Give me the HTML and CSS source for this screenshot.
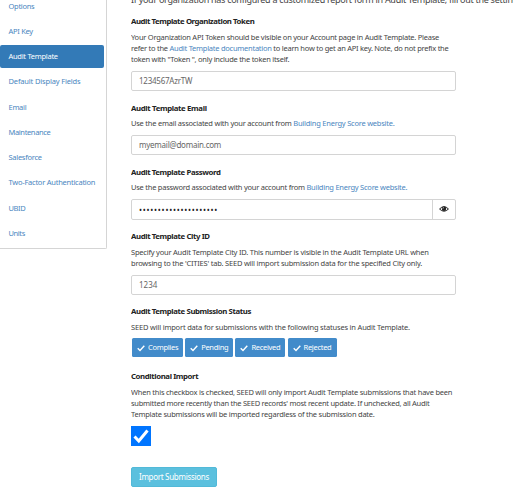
FILE: index.html
```html
<!DOCTYPE html>
<html lang="en">
<head>
<meta charset="utf-8">
<title>Audit Template</title>
<link rel="stylesheet" href="styles.css">
</head>
<body>
<div class="page">
  <nav class="sidebar">
    <a class="s-options">Options</a>
    <a class="s-api">API Key</a>
    <a class="active">Audit Template</a>
    <a class="s-fields">Default Display Fields</a>
    <a class="s-email">Email</a>
    <a class="s-maint">Maintenance</a>
    <a class="s-sales">Salesforce</a>
    <a class="s-two">Two-Factor Authentication</a>
    <a class="s-ubid">UBID</a>
    <a class="s-units">Units</a>
  </nav>
  <main>
    <p class="intro">If your organization has configured a customized report form in Audit Template, fill out the settings below.</p>
    <section class="group three">
      <h2 class="h1">Audit Template Organization Token</h2>
      <p><span class="l1">Your Organization API Token should be visible on your Account page in Audit Template. Please</span><br><span class="l2">refer to the <a>Audit Template documentation</a> to learn how to get an API key. Note, do not prefix the</span><br><span class="l3">token with "Token ", only include the token itself.</span></p>
      <div class="field"><span class="v1">1234567AzrTW</span></div>
    </section>
    <section class="group">
      <h2 class="h2">Audit Template Email</h2>
      <p><span class="l4">Use the email associated with your account from <a>Building Energy Score website.</a></span></p>
      <div class="field"><span class="v2">myemail@domain.com</span></div>
    </section>
    <section class="group">
      <h2>Audit Template Password</h2>
      <p><span class="l5">Use the password associated with your account from <a>Building Energy Score website.</a></span></p>
      <div class="field"><span class="dots">•••••••••••••••••••••</span>
        <span class="reveal"><svg viewBox="0 0 18 14"><path d="M1 7Q9-1.500 17 7Q9 15 1 7Z" fill="none" stroke="#222" stroke-width="1.800"/><circle cx="9" cy="6.500" r="4" fill="#222"/><path d="M6.800 6.500Q7 4.500 9 4.200" fill="none" stroke="#fff"/></svg></span></div>
    </section>
    <section class="group two">
      <h2>Audit Template City ID</h2>
      <p><span class="l6">Specify your Audit Template City ID. This number is visible in the Audit Template URL when</span><br><span class="l7">browsing to the 'CITIES' tab. SEED will import submission data for the specified City only.</span></p>
      <div class="field"><span class="v3">1234</span></div>
    </section>
    <section class="group status">
      <h2>Audit Template Submission Status</h2>
      <p><span class="l8">SEED will import data for submissions with the following statuses in Audit Template.</span></p>
      <div class="tags">
        <span class="tag t1"><svg viewBox="0 0 8 8"><path d="M.7 4.300L3 6.500L7.300 1.700"/></svg>Complies</span>
        <span class="tag t2"><svg viewBox="0 0 8 8"><path d="M.7 4.300L3 6.500L7.300 1.700"/></svg>Pending</span>
        <span class="tag t3"><svg viewBox="0 0 8 8"><path d="M.7 4.300L3 6.500L7.300 1.700"/></svg>Received</span>
        <span class="tag t4"><svg viewBox="0 0 8 8"><path d="M.7 4.300L3 6.500L7.300 1.700"/></svg>Rejected</span>
      </div>
    </section>
    <section class="group cond">
      <h2>Conditional Import</h2>
      <p><span class="l9">When this checkbox is checked, SEED will only import Audit Template submissions that have been</span><br><span class="l10">submitted more recently than the SEED records' most recent update. If unchecked, all Audit</span><br><span class="l11">Template submissions will be imported regardless of the submission date.</span></p>
      <div class="check"><svg viewBox="0 0 20 20"><path d="M3.500 10.500L7.800 15L16.500 4.500"/></svg></div>
    </section>
    <div class="import"><span>Import Submissions</span></div>
  </main>
</div>
</body>
</html>
```
FILE: styles.css
```css
* { box-sizing: border-box; }
body {
  margin: 0;
  width: 513px;
  height: 490px;
  overflow: hidden;
  background: #fff;
  color: #444;
  font: 7.5px/11.25px "Noto Sans", sans-serif;
}
.page { display: flex; align-items: flex-start; height: 490px; overflow: hidden; }
a { color: #4a86c0; white-space: nowrap; }
.sidebar {
  width: 107px;
  height: 248.500px;
  margin-right: 24px;
  flex: none;
  display: flex;
  flex-direction: column;
  gap: 2.100px;
  border-right: 1px solid #d5d5d5;
  border-bottom: 1px solid #d5d5d5;
  border-radius: 0 0 2px 0;
  letter-spacing: -.28px;
}
.sidebar a {
  flex: none;
  width: 104px;
  height: 23.200px;
  padding-left: 8.500px;
  line-height: 23px;
  border-radius: 2px;
}
.sidebar a:first-child { margin-top: -5.500px; }
.sidebar .active { background: #337ab7; color: #fff; }
.s-fields { letter-spacing: -.16px; }
.s-maint { letter-spacing: -.36px; }
.s-two { letter-spacing: -.24px; }
.s-ubid, .s-units { letter-spacing: -.4px; }
main { width: 382px; flex: none; overflow: hidden; height: 490px; }
.intro {
  margin: -7px 0 11px;
  height: 12px;
  line-height: 13px;
  font-size: 9px;
  letter-spacing: -.28px;
  white-space: nowrap;
}
.group { height: 64.250px; width: 325px; }
.group.three { height: 86.500px; }
.group.two { height: 75px; }
.group.status { height: 65px; }
.group.cond { height: 96px; }
h2 {
  margin: 0 0 4.500px;
  height: 11px;
  font-size: 7.800px;
  line-height: 11px;
  font-weight: 700;
  letter-spacing: -.39px;
  color: #222;
  white-space: nowrap;
}
.h1 { letter-spacing: -.43px; }
.h2 { letter-spacing: -.35px; }
.group p { margin: 0 0 5.500px; white-space: nowrap; }
.l1 { letter-spacing: -.25px; }
.l2 { letter-spacing: -.25px; }
.l3 { letter-spacing: -.255px; }
.l4 { letter-spacing: -.23px; }
.l5 { letter-spacing: -.245px; }
.l6 { letter-spacing: -.22px; }
.l7 { letter-spacing: -.21px; }
.l8 { letter-spacing: -.19px; }
.l9 { letter-spacing: -.225px; }
.l10 { letter-spacing: -.255px; }
.l11 { letter-spacing: -.235px; }
.v1, .v2 { letter-spacing: -.24px; }
.field {
  height: 20.500px;
  padding-left: 7px;
  display: flex;
  align-items: center;
  justify-content: space-between;
  border: 1px solid #d4d4d4;
  border-radius: 2px;
  color: #666;
  font-size: 8px;
}
.dots { color: #222; letter-spacing: .76px; }
.reveal {
  width: 23px;
  height: 100%;
  display: flex;
  align-items: center;
  justify-content: center;
  border-left: 1px solid #d4d4d4;
}
.reveal svg { width: 10px; height: 8px; }
.tags { display: flex; gap: 2.700px; padding-left: 1px; }
.tag {
  height: 18.500px;
  padding-left: 5px;
  display: flex;
  align-items: center;
  gap: 3px;
  background: #428bca;
  color: #fff;
  border-radius: 1.500px;
  letter-spacing: -.3px;
  white-space: nowrap;
}
.tag svg { width: 8px; height: 8px; }
.tag path { fill: none; stroke: #fff; stroke-width: 1.400; }
.t1 { width: 50.500px; }
.t2 { width: 47.500px; }
.t3 { width: 49.500px; }
.t4 { width: 49.500px; }
.check { width: 20px; height: 20px; background: #0075ff; }
.check svg { display: block; }
.check path { fill: none; stroke: #fff; stroke-width: 3; }
.import {
  width: 86px;
  height: 20px;
  background: #5bc0de;
  border: 1px solid #52b9d8;
  border-radius: 2px;
  color: #fff;
  font-size: 8px;
  line-height: 18px;
  padding-left: 7px;
  letter-spacing: -.3px;
  white-space: nowrap;
}
```
